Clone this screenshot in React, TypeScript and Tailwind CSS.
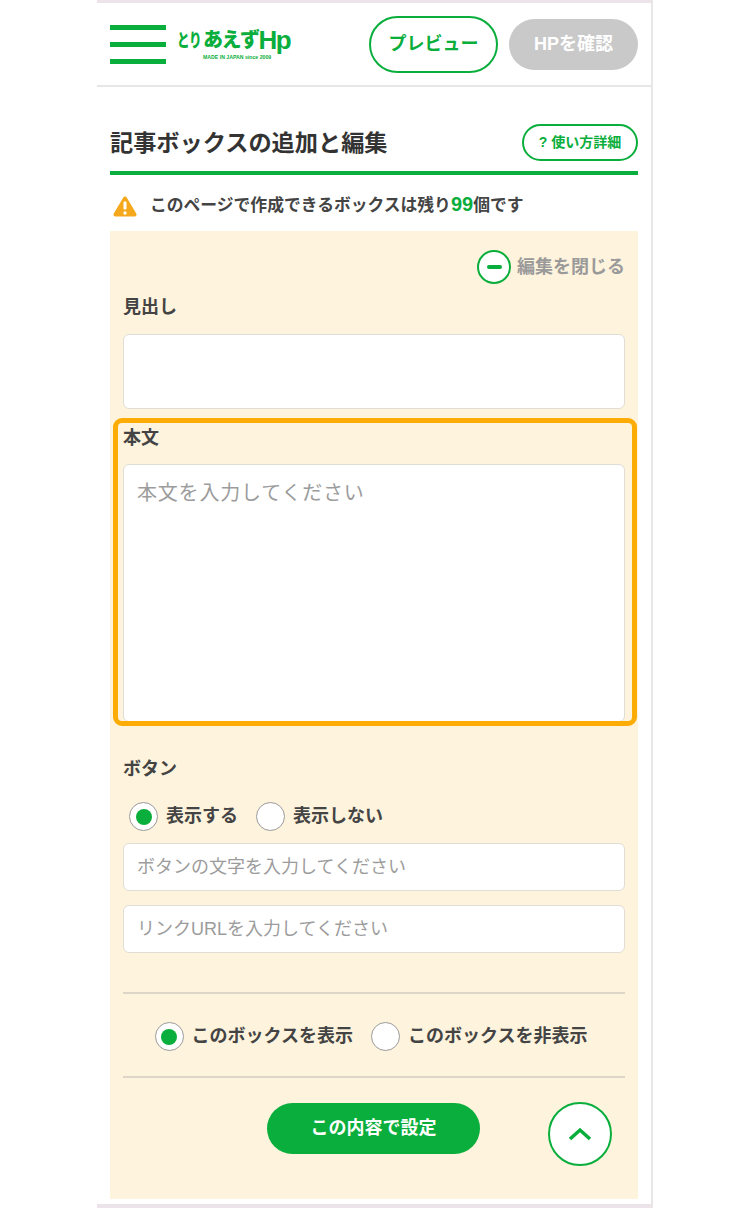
import type { ReactNode } from "react";

const FONT = `font-['Liberation_Sans','Noto_Sans_CJK_JP',sans-serif]`;

function Radio({ on, label, gap = "mr-[18px]" }: { on?: boolean; label: string; gap?: string }) {
  return (
    <div className={`flex items-center ${gap}`}>
      <span className="flex h-[29px] w-[29px] items-center justify-center rounded-full border border-[#9a9a9a] bg-white">
        {on && <span className="h-[16px] w-[16px] rounded-full bg-[#0aae3c]" />}
      </span>
      <span className="mb-[2px] ml-[8px] text-[18px] leading-[24px] font-bold text-[#444]">{label}</span>
    </div>
  );
}

function Label({ children, className = "" }: { children: ReactNode; className?: string }) {
  return <div className={`text-[18px] leading-[24px] font-bold text-[#444] ${className}`}>{children}</div>;
}

function Field({ text, className = "" }: { text: string; className?: string }) {
  return (
    <div className={`flex h-[48px] items-center rounded-[6px] border border-[#e0ddd6] bg-white pl-[13px] text-[18px] text-[#9c9c9c] ${className}`}>
      {text}
    </div>
  );
}

export default function App() {
  return (
    <div className={`relative h-[1208px] w-[750px] overflow-hidden bg-white ${FONT}`}>
      <div className="ml-[97px] flex h-[1208px] w-[556px] flex-col border-r-2 border-[#e9e6e8]">
        <div className="h-[3px] bg-[#ece4e8]" />

        <header className="flex h-[84px] items-center border-b-2 border-[#e6e6e6] pr-[13px] pl-[13px]">
          <div className="flex h-[39px] w-[56px] flex-col justify-between">
            <span className="h-[5px] bg-[#0aae3c]" />
            <span className="h-[5px] bg-[#0aae3c]" />
            <span className="h-[5px] bg-[#0aae3c]" />
          </div>
          <div className="mt-[2px] ml-[11px] w-[114px]">
            <div className="flex h-[22px] items-end whitespace-nowrap text-[#0aae3c]">
              <span className="inline-block w-[26px] origin-left scale-x-[0.7] text-[18px] leading-[22px] font-black tracking-[-1px]">とり</span>
              <span className="text-[20px] leading-[24px] font-black tracking-[-1.5px]">あえず</span>
              <span className="text-[26px] leading-[24px] font-bold tracking-[-1.5px]">Hp</span>
            </div>
            <div className="mt-[2px] ml-[26px] text-[5.2px] leading-[6px] font-bold whitespace-nowrap text-[#0aae3c]">MADE IN JAPAN since 2009</div>
          </div>
          <button className="ml-[78px] flex h-[57px] w-[129px] items-center justify-center rounded-full border-[2.5px] border-[#0aae3c] bg-white text-[18px] font-bold text-[#0aae3c]">
            プレビュー
          </button>
          <button className="mt-[1px] ml-[11px] flex h-[51px] w-[129px] items-center justify-center rounded-full bg-[#c9c9c9] text-[18px] font-bold text-white">
            HPを確認
          </button>
        </header>

        <div className="px-[13px]">
          <div className="flex items-end justify-between border-b-4 border-[#0aae3c] pt-[37px] pb-[10px]">
            <h1 className="text-[23.2px] leading-[36px] font-bold text-[#333]">記事ボックスの追加と編集</h1>
            <a className="flex h-[37px] w-[116px] items-center justify-center rounded-full border-2 border-[#0aae3c] text-[14px] font-bold text-[#0aae3c]">
              ? 使い方詳細
            </a>
          </div>

          <div className="flex h-[56px] items-center pl-[3px]">
            <svg width="24" height="23" viewBox="0 0 24 23" className="mt-[6px]">
              <path d="M12 3.5 L21.5 19.5 H2.5 Z" fill="#f5a81c" stroke="#f5a81c" strokeWidth="4" strokeLinejoin="round" />
              <rect x="10.5" y="6.5" width="3" height="8" rx="1" fill="#fff" />
              <circle cx="12" cy="18" r="1.7" fill="#fff" />
            </svg>
            <p className="mt-[3px] ml-[13px] text-[16.8px] leading-[24px] font-bold whitespace-nowrap text-[#444]">
              このページで作成できるボックスは残り<span className="text-[20px] text-[#0aae3c]">99</span>個です
            </p>
          </div>

          <section className="relative h-[968px] bg-[#fef3dc] px-[13px]">
            <div className="flex justify-end pt-[19px]">
              <div className="flex items-center">
                <span className="flex h-[34px] w-[34px] items-center justify-center rounded-full border-[2.5px] border-[#0aae3c] bg-white">
                  <span className="h-[4px] w-[15px] rounded-full bg-[#0aae3c]" />
                </span>
                <span className="ml-[6px] text-[18px] leading-[24px] font-bold text-[#9a9a9a]">編集を閉じる</span>
              </div>
            </div>

            <Label className="mt-[11px]">見出し</Label>
            <div className="mt-[15px] h-[75px] rounded-[6px] border border-[#e0ddd6] bg-white" />

            <Label className="mt-[17px]">本文</Label>
            <div className="mt-[14px] h-[258px] rounded-[6px] border border-[#e0ddd6] bg-white px-[13px] pt-[14px] text-[20px] leading-[28px] tracking-[0.8px] text-[#9c9c9c]">
              本文を入力してください
            </div>

            <Label className="mt-[35px]">ボタン</Label>
            <div className="mt-[21px] flex pl-[6px]">
              <Radio on label="表示する" />
              <Radio label="表示しない" />
            </div>
            <Field text="ボタンの文字を入力してください" className="mt-[12px]" />
            <Field text="リンクURLを入力してください" className="mt-[14px]" />

            <div className="mt-[39px] h-[2px] bg-[#ddd6c8]" />
            <div className="mt-[28px] flex justify-center pr-[6px]">
              <Radio on label="このボックスを表示" />
              <Radio label="このボックスを非表示" gap="" />
            </div>
            <div className="mt-[25px] h-[2px] bg-[#ddd6c8]" />

            <div className="relative mt-[25px] flex justify-center">
              <button className="mr-[1px] flex h-[51px] w-[213px] items-center justify-center rounded-full bg-[#0aae3c] text-[18px] font-bold text-white">
                この内容で設定
              </button>
              <span className="absolute top-[-1px] left-[425px] flex h-[64px] w-[64px] items-center justify-center rounded-full border-2 border-[#0aae3c] bg-white">
                <svg width="24" height="14" viewBox="0 0 24 14" fill="none">
                  <path d="M2 12 L12 3 L22 12" stroke="#0aae3c" strokeWidth="3.5" />
                </svg>
              </span>
            </div>

            {/* highlight box laid over the 本文 field */}
            <div className="pointer-events-none absolute top-[187px] left-[3px] h-[308px] w-[524px] rounded-[9px] border-[5px] border-[#fdab05]" />
          </section>
        </div>

        <div className="mt-auto h-[4px] bg-[#ece4e8]" />
      </div>
    </div>
  );
}
